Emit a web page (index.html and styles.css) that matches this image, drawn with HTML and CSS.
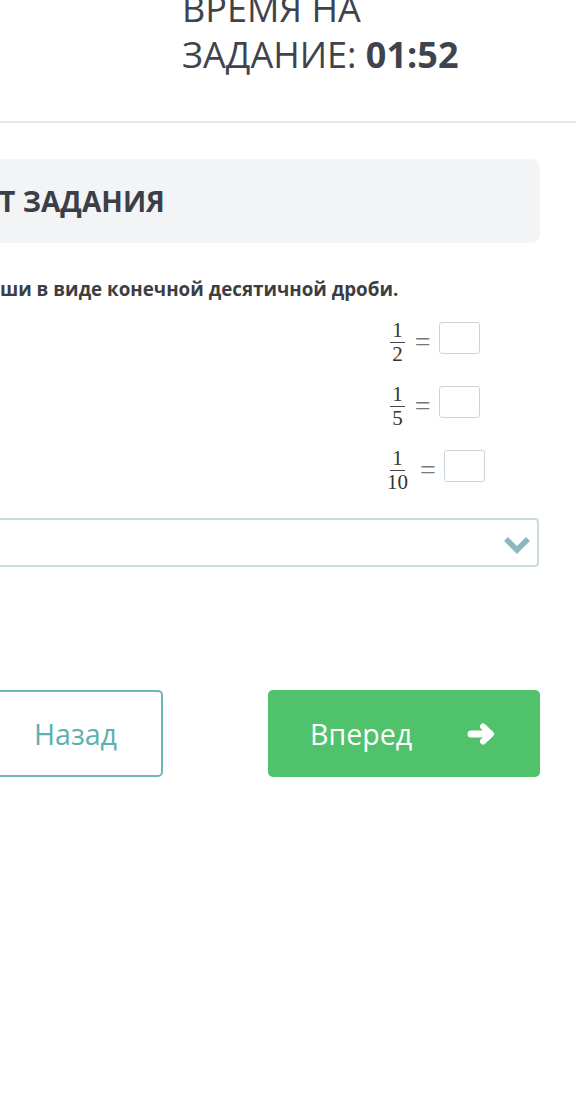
FILE: index.html
```html
<!DOCTYPE html>
<html lang="ru">
<head>
<meta charset="utf-8">
<link rel="stylesheet" href="styles.css">
</head>
<body>
<header class="timer">
  <div class="timer-text">ВРЕМЯ НА<br>ЗАДАНИЕ: <b>01:52</b></div>
</header>
<main class="content">
  <section class="task-head">
    <h2 class="task-title">Т ЗАДАНИЯ</h2>
  </section>
  <p class="task-text">ши в виде конечной десятичной дроби.</p>
  <div class="math">
    <div class="math-row">
      <span class="frac"><span class="num">1</span><span class="den">2</span></span>
      <span class="eq">=</span>
      <span class="answer"></span>
    </div>
    <div class="math-row">
      <span class="frac"><span class="num">1</span><span class="den">5</span></span>
      <span class="eq">=</span>
      <span class="answer"></span>
    </div>
    <div class="math-row">
      <span class="frac"><span class="num">1</span><span class="den">10</span></span>
      <span class="eq">=</span>
      <span class="answer"></span>
    </div>
  </div>
  <div class="select">
    <svg class="chevron" width="28" height="19" viewBox="0 0 28 19"><polyline points="3,3 14,14 25,3" fill="none" stroke="#8cb7bc" stroke-width="5.5" stroke-linejoin="miter"/></svg>
  </div>
  <nav class="buttons">
    <button class="btn btn-back">Назад</button>
    <button class="btn btn-next"><span>Вперед</span>
      <svg width="30" height="24" viewBox="0 0 30 24"><line x1="4" y1="12" x2="21" y2="12" stroke="#fff" stroke-width="7" stroke-linecap="round"/><polyline points="16,4.5 24,12 16,19.5" fill="none" stroke="#fff" stroke-width="6" stroke-linecap="round" stroke-linejoin="round"/></svg>
    </button>
  </nav>
</main>
</body>
</html>
```
FILE: styles.css
```css
html, body {
  margin: 0;
  padding: 0;
  background: #ffffff;
  overflow: hidden;
}
body {
  font-family: "Open Sans", "Liberation Sans", sans-serif;
  width: 576px;
  height: 1116px;
}
.timer {
  margin-top: -14px;
  padding: 0 0 43px 182px;
  border-bottom: 2px solid #e6e6e6;
}
.timer-text {
  font-size: 36px;
  line-height: 46px;
  color: #3f444c;
  font-weight: 400;
}
.timer-text b {
  font-weight: 700;
}
.content {
  width: 540px;
  display: flex;
  flex-direction: column;
}
.task-head {
  margin: 36px 0 0 -20px;
  height: 84px;
  background: #f3f4f6;
  border-radius: 9px;
  display: flex;
  align-items: center;
  padding-left: 19px;
}
.task-title {
  margin: 0;
  font-size: 28.2px;
  font-weight: 700;
  color: #3b3f47;
}
.task-text {
  margin: 34px 0 0 0;
  font-size: 18.8px;
  line-height: 24px;
  font-weight: 700;
  color: #3c3e42;
}
.math {
  margin: 9px 0 0 330px;
  display: flex;
  flex-direction: column;
}
.math-row {
  height: 64px;
  display: flex;
  justify-content: center;
  align-items: center;
  font-family: "Liberation Serif", "DejaVu Serif", serif;
  color: #333;
}
.frac {
  display: inline-flex;
  flex-direction: column;
  align-items: center;
  font-size: 21px;
  line-height: 21px;
}
.num {
  padding: 0 2px 1px;
  border-bottom: 1px solid #444;
}
.den {
  padding: 1px 2px 0;
}
.eq {
  margin: 0 8px 0 10px;
  font-size: 28px;
  line-height: 28px;
  color: #777;
}
.answer {
  width: 39px;
  height: 30px;
  border: 1px solid #cfd3d6;
  border-radius: 3px;
  margin-top: -8px;
}
.select {
  margin: 16px 1px 0 -20px;
  height: 45px;
  border: 2px solid #c9dcdc;
  border-radius: 4px;
  display: flex;
  justify-content: flex-end;
  align-items: center;
  padding-right: 6px;
}
.chevron {
  margin-top: 6px;
}
.buttons {
  margin-top: 123px;
  display: flex;
  justify-content: space-between;
}
.btn {
  font-family: "Open Sans", "Liberation Sans", sans-serif;
  font-size: 28.6px;
  height: 87px;
  border-radius: 5px;
  cursor: pointer;
}
.btn-back {
  margin-left: -12px;
  width: 175px;
  background: #fff;
  border: 2px solid #6db7b7;
  color: #5cb0b0;
}
.btn-next {
  width: 272px;
  background: #50c26b;
  border: none;
  color: #fff;
  display: flex;
  justify-content: space-between;
  align-items: center;
  padding: 0 43px 0 42px;
}
```
